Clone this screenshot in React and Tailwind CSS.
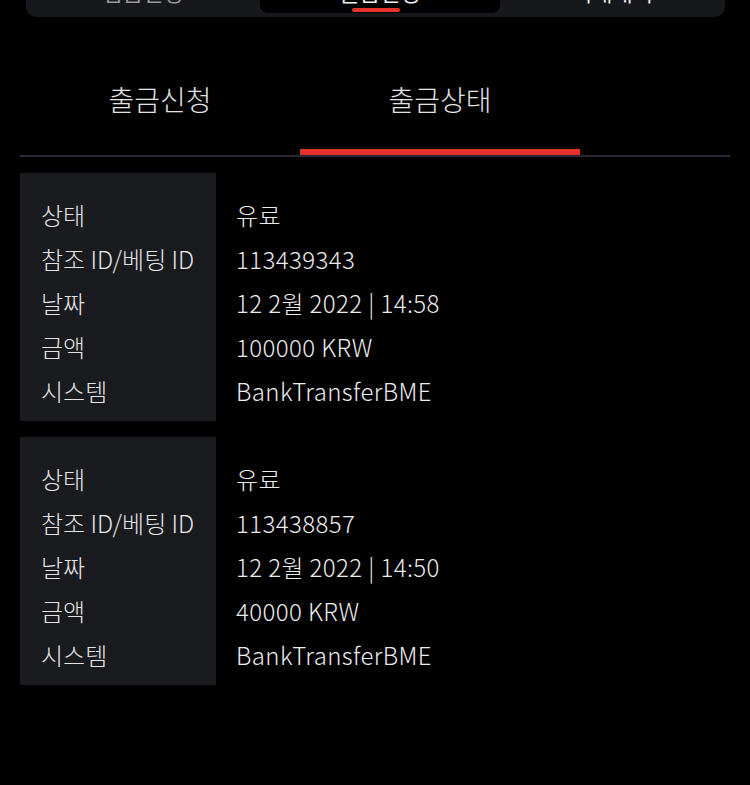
import React from "react";

const FONT = { fontFamily: '"Noto Sans CJK KR", "Noto Sans", sans-serif' };

const records = [
  {
    status: "유료",
    ref: "113439343",
    date: "12 2월 2022 | 14:58",
    amount: "100000 KRW",
    system: "BankTransferBME",
  },
  {
    status: "유료",
    ref: "113438857",
    date: "12 2월 2022 | 14:50",
    amount: "40000 KRW",
    system: "BankTransferBME",
  },
];

const labels = [
  { key: "status", label: "상태" },
  { key: "ref", label: "참조 ID/베팅 ID" },
  { key: "date", label: "날짜" },
  { key: "amount", label: "금액" },
  { key: "system", label: "시스템" },
];

const Record = ({ item }) => (
  <div className="flex">
    <div className="w-[196px] bg-[#1a1b1f] pl-[21px] pt-[20px] pb-[8px]">
      {labels.map((row) => (
        <div key={row.key} className="h-[44px] leading-[44px] text-[24px] font-light text-[#e4e4e4] whitespace-nowrap">
          {row.label}
        </div>
      ))}
    </div>
    <div className="pl-[20px] pt-[20px] pb-[8px]">
      {labels.map((row) => (
        <div key={row.key} className="h-[44px] leading-[44px] text-[24px] font-light tracking-[0.4px] text-[#ececec] whitespace-nowrap">
          {item[row.key]}
        </div>
      ))}
    </div>
  </div>
);

export default function App() {
  return (
    <div className="w-[750px] h-[785px] bg-black overflow-hidden" style={FONT}>
      {/* top tab bar (scrolled off) */}
      <div className="ml-[26px] w-[699px] h-[17px] bg-[#16181c] rounded-b-[10px] flex overflow-hidden">
        <div className="w-[234px] flex justify-center">
          <span className="block h-[22px] -mt-[20px] leading-[22px] text-[22px] text-[#9a9a9a]">입금신청</span>
        </div>
        <div className="w-[240px] h-[13px] bg-black rounded-b-[8px] flex flex-col items-center justify-between">
          <span className="block h-[22px] -mt-[20px] leading-[22px] text-[22px] text-[#f0f0f0]">출금신청</span>
          <span className="block w-[48px] h-[4px] rounded-full bg-[#e5322a] -translate-x-[4px] mb-[1px]" />
        </div>
        <div className="flex-1 flex justify-center">
          <span className="block h-[22px] -mt-[20px] leading-[22px] text-[22px] text-[#f0f0f0]">거래내역</span>
        </div>
      </div>

      {/* sub tabs */}
      <div className="mx-[20px] mt-[31px] flex border-b-2 border-[#2c2a38]">
        <div className="w-[280px] h-[107px] border-b-[6px] border-transparent flex items-center justify-center text-[28px] font-light leading-none text-[#e2e2e2]">
          출금신청
        </div>
        <div className="w-[280px] h-[107px] border-b-[6px] border-[#e5322a] flex items-center justify-center text-[28px] font-light leading-none text-[#e2e2e2]">
          출금상태
        </div>
      </div>

      <div className="mx-[20px] mt-[16px] flex flex-col gap-[16px]">
        {records.map((item, i) => (
          <Record key={i} item={item} />
        ))}
      </div>
    </div>
  );
}
